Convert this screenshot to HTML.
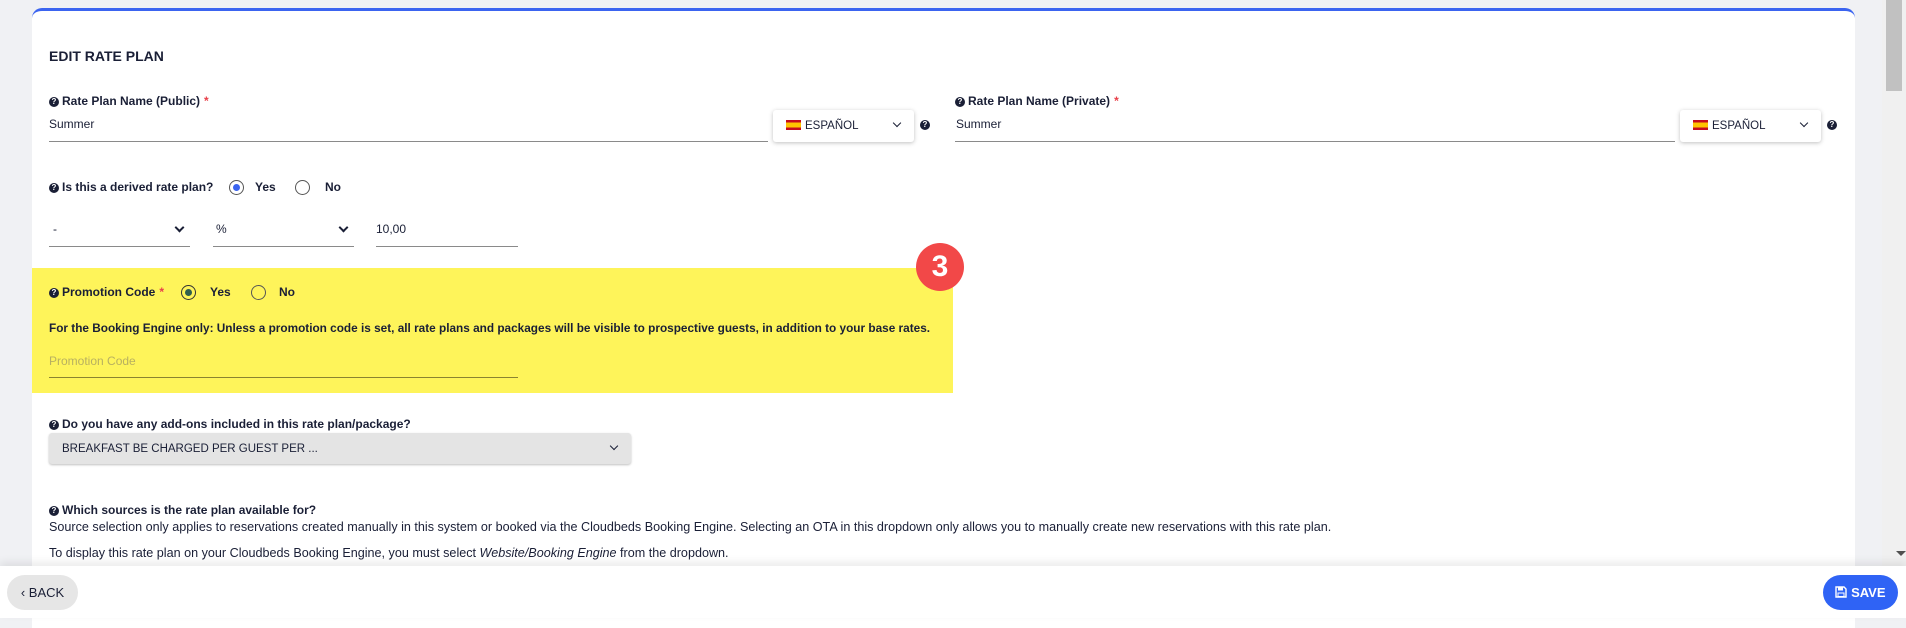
<!DOCTYPE html>
<html><head><meta charset="utf-8">
<style>
*{box-sizing:border-box;margin:0;padding:0}
body{width:1906px;height:618px;overflow:hidden;background:#f0f1f4;font-family:"Liberation Sans",sans-serif;color:#1a1f36;position:relative}
.abs{position:absolute}
.card{left:32px;top:8px;width:1823px;height:620px;background:#fff;border-top:3px solid #3b64f0;border-radius:10px 10px 0 0}
.lbl{font-size:12px;font-weight:bold;white-space:nowrap;line-height:14px}
.q{display:inline-block;width:10px;height:10px;border-radius:50%;background:#1a1f36;color:#fff;font-size:8px;line-height:10px;text-align:center;font-weight:bold;vertical-align:1px;margin-right:3px}
.star{color:#e8404a;margin-left:4px}
.txt{font-size:12px;line-height:14px;white-space:nowrap}
.ul{height:1px;background:#8a8a8a}
.dd{background:#fff;border-radius:3px;box-shadow:0 1px 4px rgba(0,0,0,.25)}
.flag{width:15px;height:10px;background:linear-gradient(#c60b1e 0 25%,#ffc400 25% 75%,#c60b1e 75%)}
.radio{width:15px;height:15px;border-radius:50%;border:1.5px solid #555;background:transparent}
.radio.on::after{content:"";position:absolute;left:2.5px;top:2.5px;width:7px;height:7px;border-radius:50%;background:#3b64f0}
.chev{width:7px;height:7px;border-right:2px solid #1a1f36;border-bottom:2px solid #1a1f36;transform:rotate(45deg)}
.chevt{width:6px;height:6px;border-right:1.2px solid #1a1f36;border-bottom:1.2px solid #1a1f36;transform:rotate(45deg)}
</style></head><body>
<div class="abs card"></div>
<div class="abs" style="left:49px;top:48px;font-size:14px;font-weight:bold">EDIT RATE PLAN</div>

<div class="abs lbl" style="left:49px;top:94px"><span class="q">?</span>Rate Plan Name (Public)<span class="star">*</span></div>
<div class="abs txt" style="left:49px;top:117px">Summer</div>
<div class="abs ul" style="left:49px;top:141px;width:719px"></div>
<div class="abs dd" style="left:773px;top:110px;width:141px;height:32px"></div>
<div class="abs flag" style="left:786px;top:120px"></div>
<div class="abs txt" style="left:805px;top:119px;font-size:11.5px">ESPAÑOL</div>
<div class="abs chevt" style="left:894px;top:120px"></div>
<div class="abs q" style="left:920px;top:120px">?</div>

<div class="abs lbl" style="left:955px;top:94px"><span class="q">?</span>Rate Plan Name (Private)<span class="star">*</span></div>
<div class="abs txt" style="left:956px;top:117px">Summer</div>
<div class="abs ul" style="left:955px;top:141px;width:720px"></div>
<div class="abs dd" style="left:1680px;top:110px;width:141px;height:32px"></div>
<div class="abs flag" style="left:1693px;top:120px"></div>
<div class="abs txt" style="left:1712px;top:119px;font-size:11.5px">ESPAÑOL</div>
<div class="abs chevt" style="left:1801px;top:120px"></div>
<div class="abs q" style="left:1827px;top:120px">?</div>

<div class="abs lbl" style="left:49px;top:180px"><span class="q">?</span>Is this a derived rate plan?</div>
<div class="abs radio on" style="left:229px;top:180px"></div>
<div class="abs lbl" style="left:255px;top:180px">Yes</div>
<div class="abs radio" style="left:295px;top:180px"></div>
<div class="abs lbl" style="left:325px;top:180px">No</div>

<div class="abs txt" style="left:53px;top:222px">-</div>
<div class="abs chev" style="left:176px;top:224px"></div>
<div class="abs ul" style="left:49px;top:246px;width:141px"></div>
<div class="abs txt" style="left:216px;top:222px">%</div>
<div class="abs chev" style="left:340px;top:224px"></div>
<div class="abs ul" style="left:213px;top:246px;width:141px"></div>
<div class="abs txt" style="left:376px;top:222px">10,00</div>
<div class="abs ul" style="left:376px;top:246px;width:142px"></div>

<div class="abs" style="left:32px;top:268px;width:921px;height:125px;background:#fef45a"></div>
<div class="abs" style="left:916px;top:243px;width:48px;height:48px;border-radius:50%;background:#f24848;color:#fff;font-size:30px;font-weight:bold;line-height:48px;text-align:center">3</div>
<div class="abs lbl" style="left:49px;top:285px"><span class="q">?</span>Promotion Code<span class="star">*</span></div>
<div class="abs radio" style="left:181px;top:285px;border-color:#333"><div style="position:absolute;left:2.5px;top:2.5px;width:7px;height:7px;border-radius:50%;background:#2e5e4e"></div></div>
<div class="abs lbl" style="left:210px;top:285px">Yes</div>
<div class="abs radio" style="left:251px;top:285px"></div>
<div class="abs lbl" style="left:279px;top:285px">No</div>
<div class="abs lbl" style="left:49px;top:321px;font-size:11.8px">For the Booking Engine only: Unless a promotion code is set, all rate plans and packages will be visible to prospective guests, in addition to your base rates.</div>
<div class="abs txt" style="left:49px;top:354px;color:#b8b060">Promotion Code</div>
<div class="abs" style="left:49px;top:377px;width:469px;height:1px;background:#8a8330"></div>

<div class="abs lbl" style="left:49px;top:417px"><span class="q">?</span>Do you have any add-ons included in this rate plan/package?</div>
<div class="abs" style="left:49px;top:433px;width:582px;height:31px;background:#e4e4e4;border-radius:3px;box-shadow:0 1px 2px rgba(0,0,0,.25)"></div>
<div class="abs txt" style="left:62px;top:442px;font-size:11.5px">BREAKFAST BE CHARGED PER GUEST PER ...</div>
<div class="abs chevt" style="left:611px;top:443px"></div>

<div class="abs lbl" style="left:49px;top:503px"><span class="q">?</span>Which sources is the rate plan available for?</div>
<div class="abs txt" style="left:49px;top:520px;font-size:12.6px">Source selection only applies to reservations created manually in this system or booked via the Cloudbeds Booking Engine. Selecting an OTA in this dropdown only allows you to manually create new reservations with this rate plan.</div>
<div class="abs txt" style="left:49px;top:546px;font-size:12.6px">To display this rate plan on your Cloudbeds Booking Engine, you must select <i>Website/Booking Engine</i> from the dropdown.</div>

<div class="abs" style="left:1882px;top:0;width:24px;height:566px;background:#f0f0f0"></div>
<div class="abs" style="left:1886px;top:0;width:16px;height:91px;background:#c1c1c1"></div>
<div class="abs" style="left:1896px;top:551px;width:0;height:0;border-left:5px solid transparent;border-right:5px solid transparent;border-top:5px solid #505050"></div>

<div class="abs" style="left:0;top:566px;width:1906px;height:52px;background:#fff;box-shadow:0 -4px 8px rgba(0,0,0,.08)"></div>
<div class="abs" style="left:7px;top:575px;width:71px;height:35px;border-radius:18px;background:#e6e6e6;font-size:13px;line-height:35px;text-align:center;color:#1a1f36">‹ BACK</div>
<div class="abs" style="left:1823px;top:575px;width:75px;height:35px;border-radius:18px;background:#2f63f5;color:#fff;font-size:13px;font-weight:bold;line-height:35px;text-align:center">
<svg width="12" height="12" viewBox="0 0 12 12" style="vertical-align:-1px"><path d="M1 1h8l2 2v8H1z" fill="none" stroke="#fff" stroke-width="1.4"/><rect x="3" y="1.5" width="5" height="3" fill="#fff"/><rect x="3" y="7" width="6" height="3.5" fill="none" stroke="#fff"/></svg> SAVE</div>
</body></html>
